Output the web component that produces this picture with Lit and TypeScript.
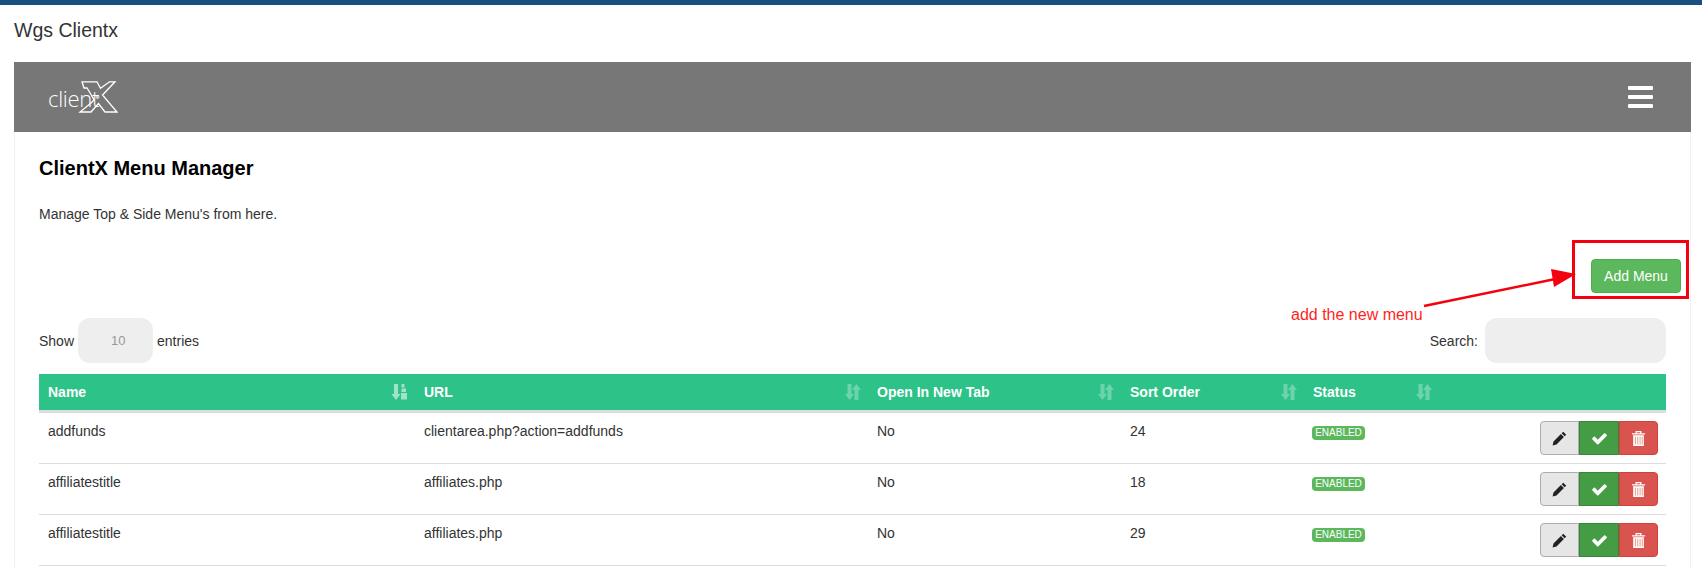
import { LitElement, html, css, svg } from "lit";
import { customElement } from "lit/decorators.js";

const sortBoth = svg`<svg class="sort" viewBox="0 0 16 16"><path d="M2.500 0h4v10H9l-4.500 6L0 10h2.500zM9.500 6h-2.600L11.500 0 16 6h-2.500v10h-4z" fill="#fff"/></svg>`;
const sortName = svg`<svg class="sort name" viewBox="0 0 16 16"><path d="M2 0h4v10h2.500L4 16-.5 10H2z" fill="#fff"/><path d="M9.500 0h3v3.500h-3zM9.500 4.500h4.500V8H9.500zM9 9h6v6.500H9z" fill="#fff"/></svg>`;
const pencil = svg`<svg class="ic" viewBox="0 0 16 16"><path d="M12 .8l3.200 3.200-1.700 1.700-3.200-3.200zM9.500 3.300l3.200 3.200L4.800 14.400 .6 15.400l1-4.200z" fill="#222"/></svg>`;
const check = svg`<svg class="ic chk" viewBox="0 0 1792 1792"><path fill="#fff" d="M1671 566q0 40-28 68l-724 724-136 136q-28 28-68 28t-68-28l-136-136-362-362q-28-28-28-68t28-68l136-136q28-28 68-28t68 28l294 295 656-657q28-28 68-28t68 28l136 136q28 28 28 68z"/></svg>`;
const trash = svg`<svg class="ic" viewBox="0 0 14 16"><path d="M0 3h14M4.500 3V.700h5V3" fill="none" stroke="#fff" stroke-width="1.300"/><path d="M1.300 4.500h11.400V16H1.300z" fill="#fff"/><path d="M3.700 6v8.500M6.200 6v8.500M8.700 6v8.500M11 6v8.500" stroke="#e9a08e" stroke-width="1.100"/></svg>`;

const rows = [
  ["addfunds", "clientarea.php?action=addfunds", "No", "24"],
  ["affiliatestitle", "affiliates.php", "No", "18"],
  ["affiliatestitle", "affiliates.php", "No", "29"],
];

@customElement("app-root")
export class AppRoot extends LitElement {
  static styles = css`
    :host { display: block; height: 568px; overflow: hidden; background: #fff; font: 14px/20px "Liberation Sans", Arial, sans-serif; color: #333; position: relative; }
    .topbar { height: 5px; background: #1a4f82; }
    .title { margin: 0; padding: 14px 14px 0; height: 57px; box-sizing: border-box; font-size: 19.500px; font-weight: 400; line-height: 22px; color: #333; }
    .panel { margin: 0 11px 0 14px; height: 520px; border: solid #edf2fa; border-width: 0 1px; }
    .head { margin: 0 -1px; height: 70px; background: #777; padding: 0 38px 0 34px; display: flex; align-items: center; justify-content: space-between; }
    .logo { position: relative; width: 70px; height: 32px; color: #fff; }
    .logo svg { position: absolute; left: 0; top: 0; }
    .logo span { position: absolute; left: 0; top: 5px; font-size: 22px; line-height: 24px; letter-spacing: -.3px; font-family: "Open Sans", sans-serif; font-weight: 300; }
    .burger { width: 25px; display: flex; flex-direction: column; gap: 4.500px; }
    .burger i { display: block; height: 4.500px; background: #fff; border-radius: 1px; }
    .body { padding: 0 24px; }
    h2 { margin: 0; padding-top: 24px; font-size: 20px; line-height: 24px; font-weight: 700; color: #000; }
    .desc { margin: 0; padding-top: 24px; height: 20px; }
    .actions { display: flex; justify-content: flex-end; margin: 35px -15px 0 0; }
    .add { box-sizing: border-box; width: 90px; height: 34px; background: #5cb85c; border: 1px solid #4cae4c; border-radius: 4px; color: #fff; font: inherit; padding: 0; }
    .controls { display: flex; justify-content: space-between; align-items: center; margin-top: 25px; }
    .ctl { display: flex; align-items: center; }
    .select { width: 75px; height: 45px; margin: 0 4px 0 4px; border-radius: 12px; background: #eee; color: #999; box-sizing: border-box; padding: 0 0 0 33px; display: flex; align-items: center; font-size: 13px; }
    .input { width: 181px; height: 45px; margin-left: 7px; border-radius: 12px; background: #eee; }
    table { width: 100%; margin-top: 11px; border-collapse: collapse; table-layout: fixed; }
    th { height: 36px; padding: 0 7px 0 9px; background: #2dc287; color: #fff; text-align: left; font-weight: 700; border-bottom: 3px solid #ddd; }
    th div { display: flex; justify-content: space-between; align-items: center; }
    .sort { width: 16px; height: 16px; opacity: .3; flex: none; }
    .sort.name { opacity: .55; }
    td { padding: 8px 9px; vertical-align: top; border-bottom: 1px solid #ddd; height: 34px; }
    .badge { display: inline-block; box-sizing: border-box; width: 53px; height: 14px; margin: 5px 0 0 -1px; background: #5cb85c; border-radius: 4px; color: #fff; font-size: 10px; line-height: 13px; text-align: center; vertical-align: top; }
    .group { display: flex; justify-content: flex-end; margin-right: -1px; }
    .btn { box-sizing: border-box; height: 34px; display: flex; align-items: center; justify-content: center; border: 1px solid; }
    .edit { width: 39px; background: #e6e6e6; border-color: #adadad; border-radius: 4px 0 0 4px; }
    .ok { width: 40px; background: #449d44; border-color: #398439; }
    .del { width: 39px; background: #d9534f; border-color: #d43f3a; border-radius: 0 4px 4px 0; }
    .ic { width: 15px; height: 15px; }
    .ic.chk { width: 17px; height: 17px; }
    .note { position: absolute; left: 1291px; top: 305px; font-size: 16px; line-height: 20px; color: #ff1f1f; }
    .box { position: absolute; left: 1572px; top: 240px; width: 117px; height: 59px; box-sizing: border-box; border: 3px solid #f5000f; }
    .arrow { position: absolute; left: 1420px; top: 265px; width: 160px; height: 45px; pointer-events: none; }
  `;

  render() {
    return html`
      <div class="topbar"></div>
      <h1 class="title">Wgs Clientx</h1>
      <div class="panel">
        <div class="head">
          <div class="logo">
            <svg width="70" height="32" viewBox="0 0 70 32">
              <path d="M34 .8h15l3.500 6.500 9-6.500h5.500L54.500 14 69 31H57l-6.500-8.500L43 31H32l11-9 3-3-3-5.500L39 7h-3z" fill="none" stroke="#fff" stroke-width="1.300"/>
              <circle cx="49.500" cy="16" r="2" fill="#ccc"/>
            </svg>
            <span>client</span>
          </div>
          <div class="burger"><i></i><i></i><i></i></div>
        </div>
        <div class="body">
          <h2>ClientX Menu Manager</h2>
          <p class="desc">Manage Top &amp; Side Menu's from here.</p>
          <div class="actions"><button class="add">Add Menu</button></div>
          <div class="controls">
            <div class="ctl">Show <div class="select">10</div> entries</div>
            <div class="ctl">Search: <div class="input"></div></div>
          </div>
          <table>
            <colgroup><col style="width:376px"/><col style="width:453px"/><col style="width:253px"/><col style="width:183px"/><col style="width:135px"/><col/></colgroup>
            <thead><tr>
              <th><div>Name ${sortName}</div></th>
              <th><div>URL ${sortBoth}</div></th>
              <th><div>Open In New Tab ${sortBoth}</div></th>
              <th><div>Sort Order ${sortBoth}</div></th>
              <th><div>Status ${sortBoth}</div></th>
              <th></th>
            </tr></thead>
            <tbody>
              ${rows.map(r => html`<tr>
                <td>${r[0]}</td><td>${r[1]}</td><td>${r[2]}</td><td>${r[3]}</td>
                <td><span class="badge">ENABLED</span></td>
                <td><div class="group">
                  <div class="btn edit">${pencil}</div>
                  <div class="btn ok">${check}</div>
                  <div class="btn del">${trash}</div>
                </div></td>
              </tr>`)}
            </tbody>
          </table>
        </div>
      </div>
      <div class="box"></div>
      <svg class="arrow" viewBox="0 0 160 45">
        <path d="M4 41L140 13" stroke="#f5000f" stroke-width="2.500" fill="none"/>
        <path d="M156 9L131 4l3 18z" fill="#f5000f"/>
      </svg>
      <div class="note">add the new menu</div>
    `;
  }
}
